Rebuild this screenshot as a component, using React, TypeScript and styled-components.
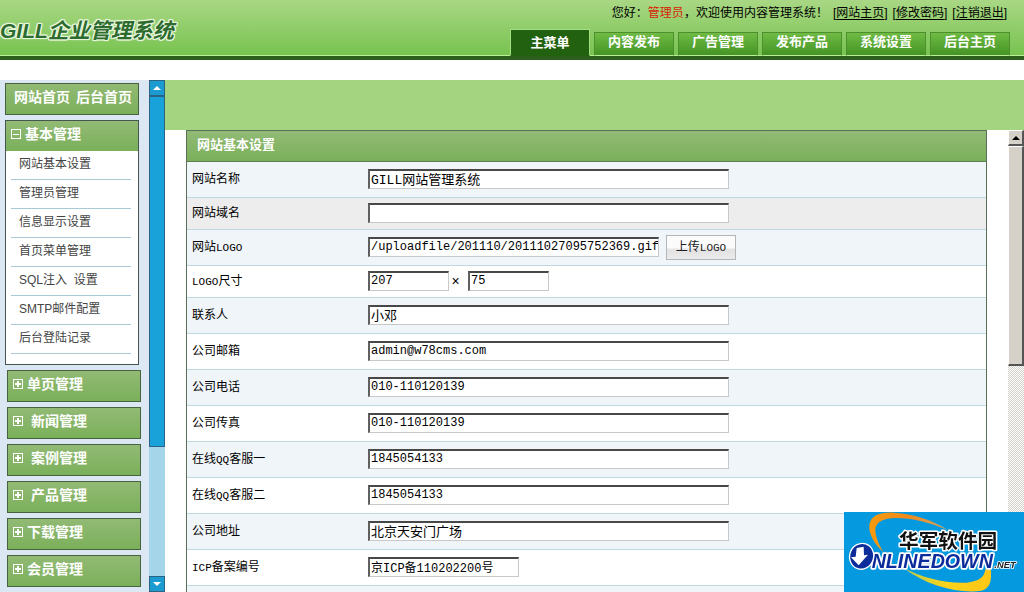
import React from "react";
import styled, { createGlobalStyle, css } from "styled-components";

const sans = `"Liberation Sans", "Noto Sans CJK SC", sans-serif`;
const mono = `"Liberation Mono", "Noto Sans CJK SC", monospace`;

const GlobalStyle = createGlobalStyle`
  * { box-sizing: border-box; }
  body {
    margin: 0;
    background: #fff;
    color: #000;
    font: 12px/18px ${sans};
  }
  button, input { margin: 0; font: inherit; color: inherit; }
`;

const Page = styled.div`
  display: flex;
  flex-direction: column;
  height: 100vh;
  overflow: hidden;
`;

/* Header */

const Header = styled.header`
  flex: none;
  display: flex;
  justify-content: space-between;
  height: 60px;
  background: linear-gradient(#a9d784, #77c34f);
  border-bottom: 4px solid #2c5e1e;
  box-shadow: inset 0 -1px #b9ef98;
`;

const Brand = styled.h1`
  margin: 0;
  align-self: center;
  padding-top: 6px;
  font-size: 21px;
  line-height: 28px;
  font-weight: bold;
  font-style: italic;
  white-space: nowrap;
  color: #2d6b2f;
  text-shadow: 1px 0 #e9f7df, -1px 0 #e9f7df, 0 1px #e9f7df, 0 -1px #e9f7df,
    1px 1px #e9f7df, -1px -1px #e9f7df, 1px -1px #e9f7df, -1px 1px #e9f7df,
    0 0 3px #e9f7df;
`;

const HeaderSide = styled.div`
  display: flex;
  flex-direction: column;
  justify-content: space-between;
  align-items: flex-end;
`;

const Greeting = styled.div`
  display: flex;
  gap: 5px;
  padding: 4px 17px 0 0;
  white-space: nowrap;
`;

const UserName = styled.span`
  color: #d81e06;
`;

const PlainLink = styled.a`
  color: inherit;
  text-underline-offset: 2px;
`;

const Tabs = styled.nav`
  display: flex;
  align-items: flex-end;
  gap: 4px;
  padding-right: 14px;
`;

const Tab = styled.a<{ $active?: boolean }>`
  width: 80px;
  height: 24px;
  border: 1px solid #4c8f2c;
  border-bottom-color: #b9ef98;
  background: linear-gradient(#6fbb44, #459425);
  color: #fff;
  font-size: 13px;
  line-height: 18px;
  font-weight: bold;
  text-align: center;
  text-decoration: none;
  ${(p) =>
    p.$active &&
    css`
      height: 27px;
      border-color: #a5dd82 #a5dd82 #22610f;
      background: #22610f;
      line-height: 25px;
    `}
`;

/* Frames */

const Frames = styled.div`
  flex: 1;
  min-height: 0;
  display: flex;
  margin-top: 20px;
`;

const Sidebar = styled.aside`
  flex: none;
  display: flex;
  width: 165px;
  background: #dbe7f2;
`;

const Menu = styled.nav`
  flex: 1;
  display: flex;
  flex-direction: column;
  gap: 5px;
  padding: 3px 8px 0 5px;
`;

const greenBar = css`
  background: linear-gradient(#92ba75, #7bb05a);
  color: #fff;
  font-weight: bold;
`;

const HomeLinks = styled.div`
  ${greenBar}
  flex: none;
  display: flex;
  gap: 6px;
  width: 134px;
  height: 32px;
  padding-left: 8px;
  border: 1px solid #47623f;
  font-size: 14px;
  line-height: 26px;
  white-space: nowrap;

  a { color: inherit; text-decoration: none; }
`;

const Group = styled.section`
  flex: none;
  width: 134px;
  padding-bottom: 10px;
  border: 1px solid #47554f;
  background: #fff;
`;

const GroupToggle = styled.button<{ $closed?: boolean }>`
  ${greenBar}
  flex: none;
  display: flex;
  align-items: center;
  gap: 3px;
  width: 100%;
  height: 30px;
  padding: 0 5px 4px;
  border: 0;
  font-size: 14px;
  line-height: 20px;
  ${(p) =>
    p.$closed &&
    css`
      width: 134px;
      height: 32px;
      margin-left: 2px;
      border: 1px solid #47623f;
    `}
`;

const GroupName = styled.span`
  white-space: pre;
`;

const SubList = styled.ul`
  margin: 0 7px 0 5px;
  padding: 0;
  list-style: none;
`;

const SubItem = styled.li`
  height: 29px;
  padding-left: 8px;
  border-bottom: 1px solid #a9c9d4;
  line-height: 26px;

  a { color: #444; text-decoration: none; white-space: pre; }
`;

const BlueScroll = styled.div`
  flex: none;
  display: flex;
  flex-direction: column;
  width: 16px;
  background: #a4d5e8;
`;

const BlueArrow = styled.button`
  display: grid;
  place-items: center;
  height: 16px;
  padding: 0;
  border: 1px solid #2d6283;
  background: #1c9bd0;
`;

const BlueThumb = styled.div`
  flex: 0 1 351px;
  border: 1px solid #2d6283;
  background: #19a2da;
`;

const Spacer = styled.div`
  flex: 1;
`;

const Content = styled.div`
  flex: 1;
  min-width: 0;
  display: flex;
  flex-direction: column;
`;

const Banner = styled.div`
  flex: none;
  height: 50px;
  background: #a4d47f;
`;

const FormFrame = styled.div`
  flex: 1;
  min-height: 0;
  display: flex;
`;

const Main = styled.main`
  flex: 1;
  min-width: 0;
  padding: 0 21px;
  overflow: hidden;
`;

const SettingsForm = styled.form`
  border: 1px solid #5a6f5a;
`;

const FormTitle = styled.h2`
  ${greenBar}
  margin: 0;
  height: 31px;
  padding-left: 10px;
  border-bottom: 1px solid #5f7f50;
  font-size: 13px;
  line-height: 28px;
`;

const Row = styled.div<{ $tone: string; $short?: boolean }>`
  display: grid;
  grid-template-columns: 176px 1fr;
  align-items: center;
  height: ${(p) => (p.$short ? 32 : 36)}px;
  padding: 0 0 1px 5px;
  border-bottom: 1px solid #bfd8e0;
  background: ${(p) => p.$tone};
`;

const Label = styled.label`
  height: 18px;
`;

const Latin = styled.span`
  font-family: ${mono};
  font-size: 11px;
  line-height: 1;
`;

const Controls = styled.div`
  display: flex;
  align-items: center;
`;

const TextInput = styled.input<{ $width: number; $large?: boolean }>`
  width: ${(p) => p.$width}px;
  height: 20px;
  padding: 0 0 ${(p) => (p.$large ? 3 : 1)}px 1px;
  border: 1px solid #c8c8c8;
  border-top: 2px solid #484848;
  border-left: 2px solid #606060;
  border-radius: 0;
  background: #fff;
  font-family: ${mono};
  font-size: ${(p) => (p.$large ? 13 : 12)}px;
  line-height: 16px;
`;

const Times = styled.span`
  width: 19px;
  padding-right: 6px;
  font-size: 14px;
  text-align: center;
`;

const UploadButton = styled.button`
  width: 70px;
  height: 25px;
  margin-left: 7px;
  padding: 0;
  border: 1px solid #b5b5b5;
  background: linear-gradient(#fbfbfb 0 50%, #e2e2e2 60%, #ebebeb);
  color: #222;
`;

const GreyScroll = styled.div`
  flex: none;
  display: flex;
  flex-direction: column;
  width: 16px;
  background: repeating-conic-gradient(#d2cfc9 0 25%, #fff 0 50%) 0 0 / 2px 2px;
`;

const bevel = css`
  border: 1px solid #fff;
  border-right: 2px solid #555;
  border-bottom: 2px solid #555;
  background: #d5d1c9;
`;

const GreyArrow = styled.button`
  ${bevel}
  display: grid;
  place-items: center;
  height: 16px;
  padding: 0;
`;

const GreyThumb = styled.div`
  ${bevel}
  height: 220px;
`;

const Watermark = styled.svg`
  position: fixed;
  right: 0;
  bottom: 0;
  width: 180px;
  height: 80px;
`;

const BoxIcon = ({ plus }: { plus?: boolean }) => (
  <svg width="11" height="11" viewBox="0 0 11 11" fill="none" stroke="#fff" shapeRendering="crispEdges">
    <path d="M.5 .5h9v9h-9z" />
    <path d={plus ? "M2 5h6M5 2v6" : "M2 5h6"} strokeWidth={plus ? 2 : 1} />
  </svg>
);

const Arrow = ({ color, down }: { color: string; down?: boolean }) => (
  <svg width="8" height="4" viewBox="0 0 8 4" fill={color}>
    <path d={down ? "M0 0h8L4 4z" : "M0 4h8L4 0z"} />
  </svg>
);

const tabs = ["内容发布", "广告管理", "发布产品", "系统设置", "后台主页"];
const account = ["网站主页", "修改密码", "注销退出"];
const subItems = ["网站基本设置", "管理员管理", "信息显示设置", "首页菜单管理", "SQL注入  设置", "SMTP邮件配置", "后台登陆记录"];
const closedGroups = ["单页管理", " 新闻管理", " 案例管理", " 产品管理", "下载管理", "会员管理"];

const blue = "#f0f5f9";
const white = "#fff";

const contactRows = [
  { id: "person", label: "联系人", value: "小邓", large: true },
  { id: "mail", label: "公司邮箱", value: "admin@w78cms.com" },
  { id: "phone", label: "公司电话", value: "010-110120139" },
  { id: "fax", label: "公司传真", value: "010-110120139" },
  { id: "qq1", label: <>在线<Latin>QQ</Latin>客服一</>, value: "1845054133" },
  { id: "qq2", label: <>在线<Latin>QQ</Latin>客服二</>, value: "1845054133" },
  { id: "address", label: "公司地址", value: "北京天安门广场", large: true },
  { id: "icp", label: <><Latin>ICP</Latin>备案编号</>, value: "京ICP备110202200号", width: 151 },
];

const OnlineDown = () => (
  <Watermark viewBox="0 0 540 240" role="img" aria-label="华军软件园 ONLINEDOWN.NET">
    <defs>
      <linearGradient id="ring" x1="0" y1="0" x2="1" y2="0">
        <stop offset="0" stopColor="#f99a0c" />
        <stop offset="0.5" stopColor="#f08a1c" />
        <stop offset="1" stopColor="#c9a66a" />
      </linearGradient>
      <linearGradient id="swoosh" x1="0" y1="0" x2="1" y2="0">
        <stop offset="0" stopColor="#b8cf4a" />
        <stop offset="0.5" stopColor="#fdd21a" />
        <stop offset="1" stopColor="#fdc615" />
      </linearGradient>
    </defs>
    <path d="M0 0h540v240H0z" fill="#0599e0" />
    <path
      d="M118 120C92 98 74 68 76 40C79 12 106 0 150 2C212 6 270 26 312 54C258 32 206 18 154 18C118 18 96 30 94 52C94 72 102 94 118 120Z"
      fill="url(#ring)"
    />
    <path
      d="M180 168C236 198 310 216 368 212C404 208 422 196 424 172L440 172C444 206 438 230 412 236C350 246 246 222 180 168Z"
      fill="url(#swoosh)"
    />
    <g fontFamily={sans} fontWeight="bold" paintOrder="stroke" strokeLinejoin="round">
      <text x="165" y="108" fontSize="59" fill="#111" stroke="#fff" strokeWidth="9">华军软件园</text>
      <text x="83" y="168" fontSize="59" fontStyle="italic" fill="#0d2c9c" stroke="#fff" strokeWidth="10">NLINEDOWN</text>
      <text x="451" y="169" fontSize="28" fontStyle="italic" fill="#222" stroke="#fff" strokeWidth="5">.NET</text>
    </g>
    <g transform="rotate(18 53 133)">
      <ellipse cx="53" cy="133" rx="38" ry="41" fill="#fff" />
      <ellipse cx="53" cy="133" rx="34" ry="37" fill="#0d2c9c" />
    </g>
    <path d="M38 108l21-4 1 26 12-2-28 32-23-24 14-2z" fill="#fff" />
  </Watermark>
);

export default function App() {
  return (
    <Page>
      <GlobalStyle />
      <Header>
        <Brand>GILL企业管理系统</Brand>
        <HeaderSide>
          <Greeting>
            <span>您好：<UserName>管理员</UserName>，欢迎使用内容管理系统！</span>
            {account.map((a) => (
              <span key={a}>[<PlainLink href="#">{a}</PlainLink>]</span>
            ))}
          </Greeting>
          <Tabs>
            <Tab href="#" $active>主菜单</Tab>
            {tabs.map((t) => <Tab href="#" key={t}>{t}</Tab>)}
          </Tabs>
        </HeaderSide>
      </Header>

      <Frames>
        <Sidebar>
          <Menu>
            <HomeLinks>
              <a href="#">网站首页</a>
              <a href="#">后台首页</a>
            </HomeLinks>
            <Group>
              <GroupToggle type="button"><BoxIcon />基本管理</GroupToggle>
              <SubList>
                {subItems.map((s) => <SubItem key={s}><a href="#">{s}</a></SubItem>)}
              </SubList>
            </Group>
            {closedGroups.map((g) => (
              <GroupToggle type="button" $closed key={g}>
                <BoxIcon plus />
                <GroupName>{g}</GroupName>
              </GroupToggle>
            ))}
          </Menu>
          <BlueScroll>
            <BlueArrow type="button" aria-label="向上"><Arrow color="#fff" /></BlueArrow>
            <BlueThumb />
            <Spacer />
            <BlueArrow type="button" aria-label="向下"><Arrow color="#fff" down /></BlueArrow>
          </BlueScroll>
        </Sidebar>

        <Content>
          <Banner />
          <FormFrame>
            <Main>
              <SettingsForm>
                <FormTitle>网站基本设置</FormTitle>
                <Row $tone={blue}>
                  <Label htmlFor="name">网站名称</Label>
                  <Controls><TextInput id="name" $width={361} $large defaultValue="GILL网站管理系统" /></Controls>
                </Row>
                <Row $tone="#ededed" $short>
                  <Label htmlFor="domain">网站域名</Label>
                  <Controls><TextInput id="domain" $width={361} /></Controls>
                </Row>
                <Row $tone={blue}>
                  <Label htmlFor="logo">网站<Latin>LOGO</Latin></Label>
                  <Controls>
                    <TextInput id="logo" $width={291} defaultValue="/uploadfile/201110/20111027095752369.gif" />
                    <UploadButton type="button">上传<Latin>LOGO</Latin></UploadButton>
                  </Controls>
                </Row>
                <Row $tone={white} $short>
                  <Label htmlFor="logoWidth"><Latin>LOGO</Latin>尺寸</Label>
                  <Controls>
                    <TextInput id="logoWidth" $width={81} defaultValue="207" />
                    <Times>×</Times>
                    <TextInput aria-label="LOGO高度" $width={81} defaultValue="75" />
                  </Controls>
                </Row>
                {contactRows.map((r, i) => (
                  <Row key={r.id} $tone={i % 2 ? white : blue}>
                    <Label htmlFor={r.id}>{r.label}</Label>
                    <Controls>
                      <TextInput id={r.id} $width={r.width ?? 361} $large={r.large} defaultValue={r.value} />
                    </Controls>
                  </Row>
                ))}
                <Row $tone={blue} />
              </SettingsForm>
            </Main>
            <GreyScroll>
              <GreyArrow type="button" aria-label="向上滚动"><Arrow color="#000" /></GreyArrow>
              <GreyThumb />
            </GreyScroll>
          </FormFrame>
        </Content>
      </Frames>
      <OnlineDown />
    </Page>
  );
}
